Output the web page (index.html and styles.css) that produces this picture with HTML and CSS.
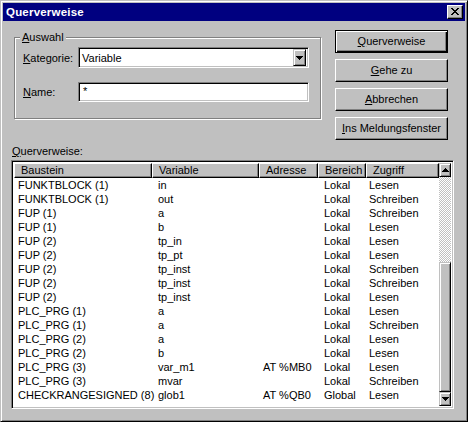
FILE: index.html
```html
<!DOCTYPE html>
<html>
<head>
<meta charset="utf-8">
<link rel="stylesheet" href="styles.css">
</head>
<body>
<div class="window">
  <div class="titlebar">
    <span class="title">Querverweise</span>
    <div class="close">
      <svg width="8" height="7" viewBox="0 0 8 7"><path d="M0 0h2v1h-2zM6 0h2v1h-2zM1 1h2v1h-2zM5 1h2v1h-2zM2 2h4v1h-4zM3 3h2v1h-2zM2 4h4v1h-4zM1 5h2v1h-2zM5 5h2v1h-2zM0 6h2v1h-2zM6 6h2v1h-2z" fill="#000"/></svg>
    </div>
  </div>
  <div class="client">
    <div class="top">
      <div class="group">
        <span class="legend"><u>A</u>uswahl</span>
        <div class="row">
          <span class="lbl"><u>K</u>ategorie:</span>
          <div class="combo">
            <span class="combo-text">Variable</span>
            <span class="combo-btn"><svg width="7" height="4" viewBox="0 0 7 4"><path d="M0 0h7v1h-1v1h-1v1h-1v1h-1v-1h-1v-1h-1v-1h-1z" fill="#000"/></svg></span>
          </div>
        </div>
        <div class="row row-name">
          <span class="lbl"><u>N</u>ame:</span>
          <div class="edit">*</div>
        </div>
      </div>
      <div class="buttons">
        <div class="btn default"><span><u>Q</u>uerverweise</span></div>
        <div class="btn"><span><u>G</u>ehe zu</span></div>
        <div class="btn"><span><u>A</u>bbrechen</span></div>
        <div class="btn"><span><u>I</u>ns Meldungsfenster</span></div>
      </div>
    </div>
    <div class="list-label"><u>Q</u>uerverweise:</div>
    <div class="list">
      <div class="list-main">
        <div class="header">
          <div class="hcell c1">Baustein</div>
          <div class="hcell c2">Variable</div>
          <div class="hcell c3">Adresse</div>
          <div class="hcell c4">Bereich</div>
          <div class="hcell c5">Zugriff</div>
        </div>
        <div class="rows">
          <div class="r"><span class="c1">FUNKTBLOCK (1)</span><span class="c2">in</span><span class="c3"></span><span class="c4">Lokal</span><span class="c5">Lesen</span></div>
          <div class="r"><span class="c1">FUNKTBLOCK (1)</span><span class="c2">out</span><span class="c3"></span><span class="c4">Lokal</span><span class="c5">Schreiben</span></div>
          <div class="r"><span class="c1">FUP (1)</span><span class="c2">a</span><span class="c3"></span><span class="c4">Lokal</span><span class="c5">Schreiben</span></div>
          <div class="r"><span class="c1">FUP (1)</span><span class="c2">b</span><span class="c3"></span><span class="c4">Lokal</span><span class="c5">Lesen</span></div>
          <div class="r"><span class="c1">FUP (2)</span><span class="c2">tp_in</span><span class="c3"></span><span class="c4">Lokal</span><span class="c5">Lesen</span></div>
          <div class="r"><span class="c1">FUP (2)</span><span class="c2">tp_pt</span><span class="c3"></span><span class="c4">Lokal</span><span class="c5">Lesen</span></div>
          <div class="r"><span class="c1">FUP (2)</span><span class="c2">tp_inst</span><span class="c3"></span><span class="c4">Lokal</span><span class="c5">Schreiben</span></div>
          <div class="r"><span class="c1">FUP (2)</span><span class="c2">tp_inst</span><span class="c3"></span><span class="c4">Lokal</span><span class="c5">Schreiben</span></div>
          <div class="r"><span class="c1">FUP (2)</span><span class="c2">tp_inst</span><span class="c3"></span><span class="c4">Lokal</span><span class="c5">Lesen</span></div>
          <div class="r"><span class="c1">PLC_PRG (1)</span><span class="c2">a</span><span class="c3"></span><span class="c4">Lokal</span><span class="c5">Lesen</span></div>
          <div class="r"><span class="c1">PLC_PRG (1)</span><span class="c2">a</span><span class="c3"></span><span class="c4">Lokal</span><span class="c5">Schreiben</span></div>
          <div class="r"><span class="c1">PLC_PRG (2)</span><span class="c2">a</span><span class="c3"></span><span class="c4">Lokal</span><span class="c5">Lesen</span></div>
          <div class="r"><span class="c1">PLC_PRG (2)</span><span class="c2">b</span><span class="c3"></span><span class="c4">Lokal</span><span class="c5">Lesen</span></div>
          <div class="r"><span class="c1">PLC_PRG (3)</span><span class="c2">var_m1</span><span class="c3">AT %MB0</span><span class="c4">Lokal</span><span class="c5">Lesen</span></div>
          <div class="r"><span class="c1">PLC_PRG (3)</span><span class="c2">mvar</span><span class="c3"></span><span class="c4">Lokal</span><span class="c5">Schreiben</span></div>
          <div class="r"><span class="c1">CHECKRANGESIGNED (8)</span><span class="c2">glob1</span><span class="c3">AT %QB0</span><span class="c4">Global</span><span class="c5">Lesen</span></div>
        </div>
      </div>
      <div class="scrollbar">
        <div class="sbtn"><svg width="7" height="4" viewBox="0 0 7 4"><path d="M3 0h1v1h1v1h1v1h1v1h-7v-1h1v-1h1v-1h1z" fill="#000"/></svg></div>
        <div class="track"></div>
        <div class="thumb"></div>
        <div class="sbtn"><svg width="7" height="4" viewBox="0 0 7 4"><path d="M0 0h7v1h-1v1h-1v1h-1v1h-1v-1h-1v-1h-1v-1h-1z" fill="#000"/></svg></div>
      </div>
    </div>
  </div>
</div>
</body>
</html>
```

FILE: styles.css
```css
* { box-sizing: border-box; }
html, body { margin: 0; padding: 0; }
body {
  width: 468px;
  height: 422px;
  background: #c0c0c0;
  font-family: "Liberation Sans", Arial, sans-serif;
  font-size: 11px;
  color: #000;
}
u { text-decoration: underline; text-underline-offset: 1px; }

.window {
  width: 468px;
  height: 422px;
  background: #c0c0c0;
  border: 1px solid;
  border-color: #c0c0c0 #000 #000 #c0c0c0;
  box-shadow: inset 1px 1px 0 #fff, inset -1px -1px 0 #808080;
  padding: 2px;
  display: flex;
  flex-direction: column;
}

.titlebar {
  height: 18px;
  background: #000080;
  display: flex;
  align-items: center;
  justify-content: space-between;
  padding: 0 2px 0 3px;
}
.title {
  color: #fff;
  font-weight: bold;
  font-size: 11.5px;
  letter-spacing: 0.2px;
}
.close {
  width: 16px;
  height: 14px;
  background: #c0c0c0;
  border: 1px solid;
  border-color: #fff #000 #000 #fff;
  box-shadow: inset -1px -1px 0 #808080;
  display: flex;
  align-items: center;
  justify-content: center;
  padding: 0 1px 1px 0;
}
.close svg { display: block; }

.client {
  flex: 1;
  display: flex;
  flex-direction: column;
  padding: 0 0 0 8px;
}

.top {
  display: flex;
  align-items: flex-start;
  padding-top: 9px;
}

.group {
  position: relative;
  margin-top: 7px;
  margin-left: 3px;
  width: 307px;
  height: 82px;
  border: 1px solid #808080;
  box-shadow: inset 1px 1px 0 #fff, 1px 1px 0 #fff;
  padding: 9px 0 0 8px;
}
.legend {
  position: absolute;
  left: 5px;
  top: -7px;
  background: #c0c0c0;
  padding: 0 2px 0 2px;
  line-height: 13px;
}
.row {
  display: flex;
  align-items: center;
}
.row-name { margin-top: 14px; }
.lbl {
  width: 55px;
}
.combo, .edit {
  width: 231px;
  background: #fff;
  border: 1px solid;
  border-color: #808080 #fff #fff #808080;
  box-shadow: inset 1px 1px 0 #000, inset -1px -1px 0 #c0c0c0;
}
.combo {
  height: 21px;
  display: flex;
  align-items: center;
  justify-content: space-between;
  padding: 2px 2px 2px 3px;
}
.combo-btn {
  width: 13px;
  height: 17px;
  background: #c0c0c0;
  border: 1px solid;
  border-color: #c0c0c0 #000 #000 #c0c0c0;
  box-shadow: inset 1px 1px 0 #fff, inset -1px -1px 0 #808080;
  display: flex;
  align-items: center;
  justify-content: center;
}
.combo-btn svg { display: block; }
.edit {
  height: 20px;
  padding: 2px 0 0 4px;
  line-height: 12px;
}

.buttons {
  margin-left: 14px;
  display: flex;
  flex-direction: column;
  gap: 6px;
}
.btn {
  width: 113px;
  height: 23px;
  border: 1px solid;
  border-color: #fff #000 #000 #fff;
  box-shadow: inset -1px -1px 0 #808080;
  display: flex;
  align-items: center;
  justify-content: center;
  padding-bottom: 1px;
}
.btn.default {
  border: 1px solid #000;
  box-shadow: inset 1px 1px 0 #fff, inset -1px -1px 0 #000, inset -2px -2px 0 #808080;
}

.list-label {
  margin-top: 5px;
  margin-left: 1px;
  line-height: 13px;
  height: 15px;
}

.list {
  width: 443px;
  height: 249px;
  border: 1px solid;
  border-color: #808080 #fff #fff #808080;
  box-shadow: inset 1px 1px 0 #000, inset -1px -1px 0 #c0c0c0;
  padding: 2px;
  background: #fff;
  display: flex;
}
.list-main {
  flex: 1;
  display: flex;
  flex-direction: column;
}
.header, .r {
  display: grid;
  grid-template-columns: 138px 107px 59px 48px 73px;
}
.header { height: 15px; }
.hcell {
  background: #c0c0c0;
  border: 1px solid;
  border-color: #fff #000 #000 #fff;
  box-shadow: inset -1px -1px 0 #808080;
  line-height: 12px;
  padding-left: 6px;
  white-space: nowrap;
  overflow: hidden;
}
.r {
  height: 14px;
  line-height: 15px;
  white-space: nowrap;
}
.r span { padding-left: 4px; overflow: visible; }
.r .c2 { padding-left: 6px; }
.r .c4 { padding-left: 6px; }
.r .c5 { padding-left: 3px; }
.hcell.c4 { padding-left: 6px; }

.scrollbar {
  width: 14px;
  display: flex;
  flex-direction: column;
}
.sbtn {
  height: 14px;
  background: #c0c0c0;
  border: 1px solid;
  border-color: #c0c0c0 #000 #000 #c0c0c0;
  box-shadow: inset 1px 1px 0 #fff, inset -1px -1px 0 #808080;
  display: flex;
  align-items: center;
  justify-content: center;
}
.sbtn svg { display: block; }
.track {
  flex: 1;
  background: repeating-conic-gradient(#c0c0c0 0 25%, #fff 0 50%) 0 0 / 2px 2px;
}
.thumb {
  height: 130px;
  background: #c0c0c0;
  border: 1px solid;
  border-color: #c0c0c0 #000 #000 #c0c0c0;
  box-shadow: inset 1px 1px 0 #fff, inset -1px -1px 0 #808080;
}
```
